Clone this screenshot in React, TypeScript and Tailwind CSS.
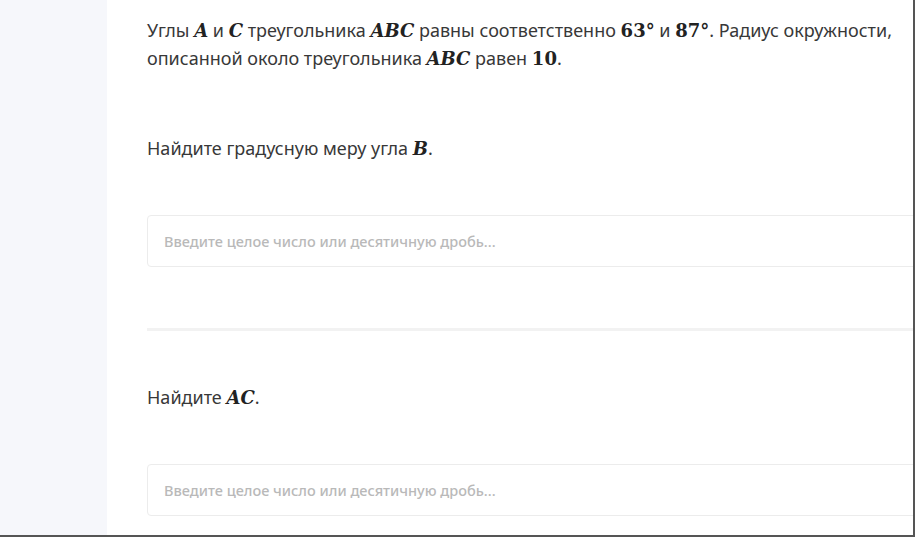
import React from "react";

const M = ({ children }: { children: React.ReactNode }) => (
  <span className="font-bold italic text-[18px] leading-none text-[#222]" style={{ fontFamily: '"DejaVu Serif", "Liberation Serif", serif' }}>
    {children}
  </span>
);
const N = ({ children }: { children: React.ReactNode }) => (
  <span className="font-bold text-[18px] leading-none text-[#222]" style={{ fontFamily: '"DejaVu Serif", "Liberation Serif", serif' }}>
    {children}
  </span>
);

const Box = () => (
  <div className="h-[52px] w-[850px] shrink-0 rounded-[4px] border border-[#ececec] bg-white flex items-center pl-[16px]">
    <span className="text-[14.5px] font-medium text-[#b9b9b9]">Введите целое число или десятичную дробь...</span>
  </div>
);

export default function App() {
  return (
    <div className="w-[915px] h-[537px] flex bg-white border-r-2 border-b-2 border-[#555] overflow-hidden" style={{ fontFamily: '"Noto Sans", "Open Sans", sans-serif' }}>
      <div className="w-[107px] shrink-0 bg-[#f6f7fb]" />
      <div className="flex-1 overflow-hidden pl-[40px] pt-[16px] text-[#383838] text-[18px] leading-[28px]">
        <p className="whitespace-nowrap">
          Углы <M>A</M> и <M>C</M> треугольника <M>ABC</M> равны соответственно <N>63°</N> и <N>87°</N>. Радиус окружности,
        </p>
        <p className="whitespace-nowrap">
          описанной около треугольника <M>ABC</M> равен <N>10</N>.
        </p>
        <p className="mt-[62px] whitespace-nowrap">
          Найдите градусную меру угла <M>B</M>.
        </p>
        <div className="mt-[53px]">
          <Box />
        </div>
        <div className="mt-[61px] h-[3px] w-[850px] bg-[#f2f2f2]" />
        <p className="mt-[52px] whitespace-nowrap">
          Найдите <M>AC</M>.
        </p>
        <div className="mt-[53px]">
          <Box />
        </div>
      </div>
    </div>
  );
}
